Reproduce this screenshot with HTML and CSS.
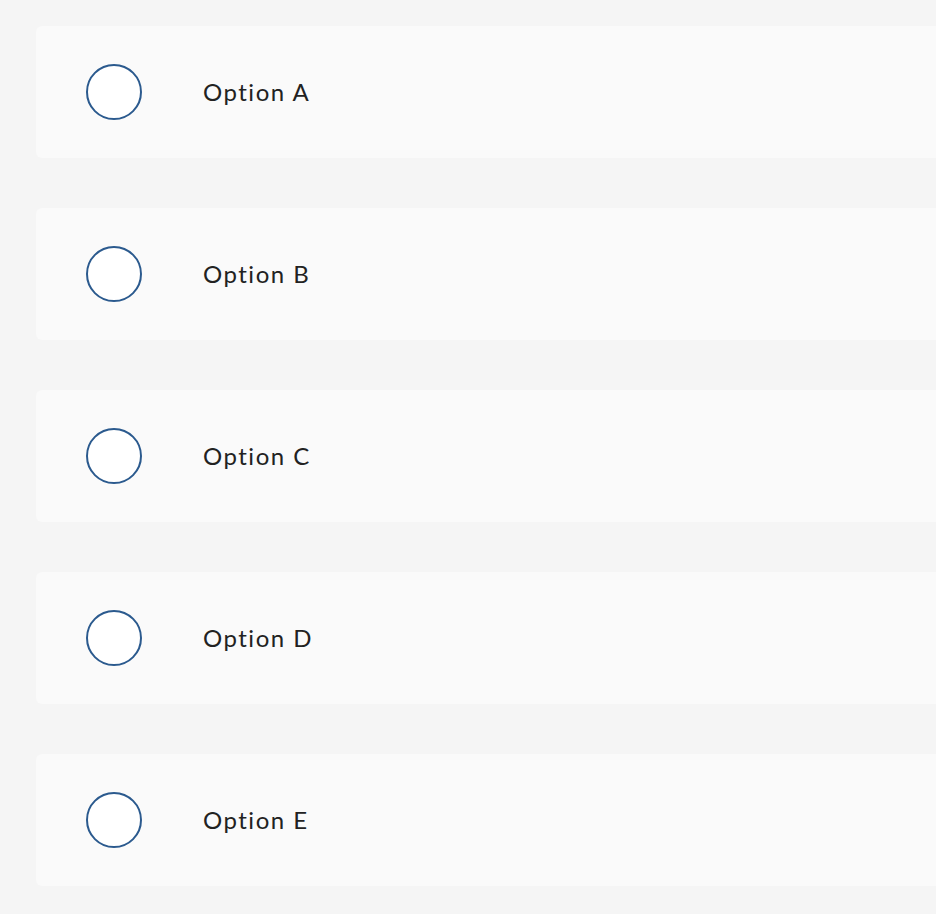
FILE: index.html
```html
<!DOCTYPE html>
<html lang="en">
<head>
<meta charset="utf-8">
<title>Options</title>
<link rel="stylesheet" href="styles.css">
</head>
<body>
<div class="list">
  <label class="option"><span class="radio"></span><span class="label">Option A</span></label>
  <label class="option"><span class="radio"></span><span class="label">Option B</span></label>
  <label class="option"><span class="radio"></span><span class="label">Option C</span></label>
  <label class="option"><span class="radio"></span><span class="label">Option D</span></label>
  <label class="option"><span class="radio"></span><span class="label">Option E</span></label>
</div>
</body>
</html>
```
FILE: styles.css
```css
html, body {
  margin: 0;
  padding: 0;
  background: #f5f5f5;
  overflow: hidden;
}
.list {
  display: flex;
  flex-direction: column;
  gap: 50px;
  padding: 26px 0 28px 36px;
}
.option {
  display: flex;
  align-items: center;
  height: 132px;
  background: #fafafa;
  border-radius: 6px 0 0 6px;
  padding-left: 50px;
  box-sizing: border-box;
}
.radio {
  width: 56px;
  height: 56px;
  box-sizing: border-box;
  border: 2px solid #2b5a8e;
  border-radius: 50%;
  background: #ffffff;
  flex: none;
}
.label {
  margin-left: 61px;
  padding-bottom: 2px;
  font-family: Lato, "Liberation Sans", sans-serif;
  font-size: 24px;
  color: #222222;
  letter-spacing: 1.5px;
}
```
